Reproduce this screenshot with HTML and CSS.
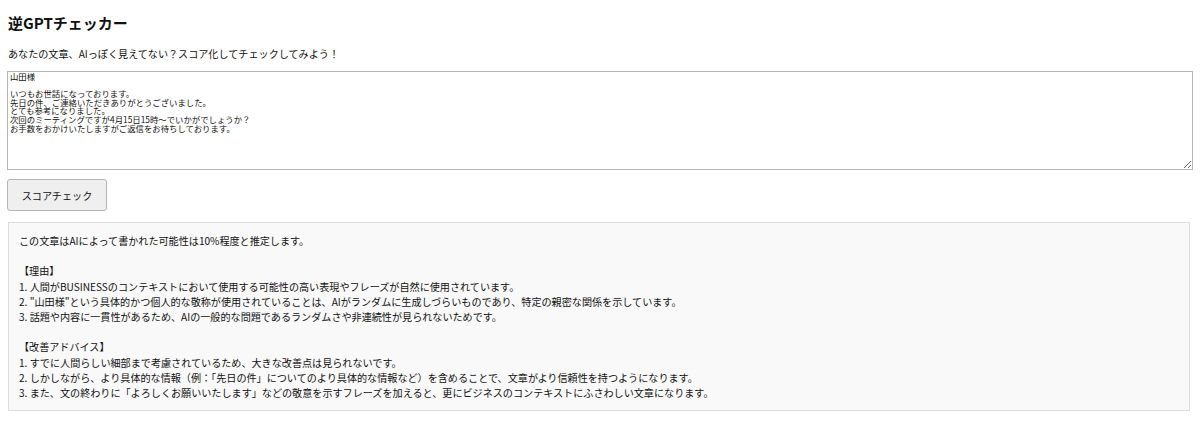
FILE: index.html
```html
<!DOCTYPE html>
<html lang="ja">
<head>
<meta charset="utf-8">
<title>逆GPTチェッカー</title>
<link rel="stylesheet" href="styles.css">
</head>
<body>
<h1 class="title">逆GPTチェッカー</h1>
<p class="lead">あなたの文章、AIっぽく見えてない？スコア化してチェックしてみよう！</p>
<textarea class="input">山田様

いつもお世話になっております。
先日の件、ご連絡いただきありがとうございました。
とても参考になりました。
次回のミーティングですが4月15日15時〜でいかがでしょうか？
お手数をおかけいたしますがご返信をお待ちしております。</textarea>
<div class="actions"><button class="btn">スコアチェック</button></div>
<div class="result">この文章はAIによって書かれた可能性は10%程度と推定します。

【理由】
1. 人間がBUSINESSのコンテキストにおいて使用する可能性の高い表現やフレーズが自然に使用されています。
2. "山田様"という具体的かつ個人的な敬称が使用されていることは、AIがランダムに生成しづらいものであり、特定の親密な関係を示しています。
3. 話題や内容に一貫性があるため、AIの一般的な問題であるランダムさや非連続性が見られないためです。

【改善アドバイス】
1. すでに人間らしい細部まで考慮されているため、大きな改善点は見られないです。
2. しかしながら、より具体的な情報（例：「先日の件」についてのより具体的な情報など）を含めることで、文章がより信頼性を持つようになります。
3. また、文の終わりに「よろしくお願いいたします」などの敬意を示すフレーズを加えると、更にビジネスのコンテキストにふさわしい文章になります。</div>
</body>
</html>
```
FILE: styles.css
```css
html, body {
  background: #fff;
}
body {
  margin: 0;
  padding: 8px;
  font-family: "Noto Sans CJK JP", "Noto Sans", sans-serif;
  font-size: 10.1px;
  color: #111;
}
.title {
  margin: 5px 0 0;
  font-size: 15px;
  line-height: 20px;
  font-weight: 700;
}
.lead {
  margin: 13px 0 0;
  line-height: 15px;
}
.input {
  display: block;
  box-sizing: border-box;
  width: 1186px;
  height: 99px;
  margin: 10px 0 0 -1px;
  padding: 0 2px;
  border: 1px solid #b5b5b5;
  border-radius: 0;
  font-family: "Noto Sans CJK JP", sans-serif;
  font-size: 8.4px;
  line-height: 8.6px;
  color: #111;
  resize: vertical;
}
.actions {
  margin-top: 9px;
}
.btn {
  display: block;
  box-sizing: border-box;
  width: 100px;
  height: 32px;
  margin-left: -1px;
  border: 1px solid #b5b5b5;
  border-radius: 3px;
  background: #efefef;
  font-family: "Noto Sans CJK JP", sans-serif;
  font-size: 10.1px;
  color: #111;
  padding: 0;
}
.result {
  box-sizing: border-box;
  width: 1182px;
  margin-top: 11px;
  padding: 10px;
  border: 1px solid #ddd;
  background: #f9f9f9;
  white-space: pre-wrap;
  line-height: 15.2px;
}
```
